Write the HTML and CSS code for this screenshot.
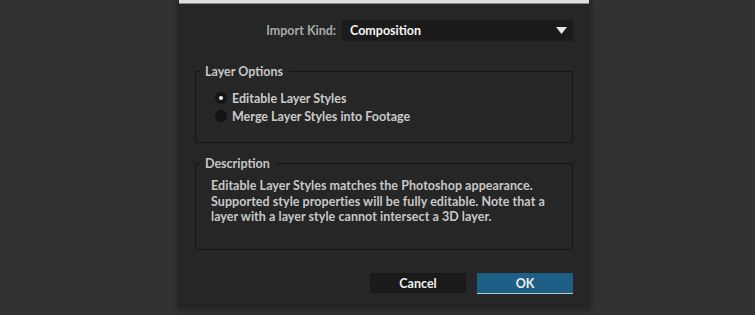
FILE: index.html
```html
<!DOCTYPE html>
<html>
<head>
<meta charset="utf-8">
<link rel="stylesheet" href="styles.css">
</head>
<body>
<div class="dialog">
  <div class="topstrip"></div>
  <div class="content">
    <div class="import-row">
      <span class="import-label">Import Kind:</span>
      <div class="select">
        <span class="select-value">Composition</span>
        <svg class="caret" width="11" height="7" viewBox="0 0 11 7"><path d="M0 0 H11 L5.5 7 Z" fill="#e6e6e6"/></svg>
      </div>
    </div>
    <fieldset class="group options">
      <legend>Layer Options</legend>
      <label class="radio-row"><span class="radio checked"></span>Editable Layer Styles</label>
      <label class="radio-row"><span class="radio"></span>Merge Layer Styles into Footage</label>
    </fieldset>
    <fieldset class="group desc">
      <legend>Description</legend>
      <p class="desc-text">Editable Layer Styles matches the Photoshop appearance.<br>Supported style properties will be fully editable. Note that a<br>layer with a layer style cannot intersect a 3D layer.</p>
    </fieldset>
    <div class="buttons">
      <button class="btn cancel">Cancel</button>
      <button class="btn ok">OK</button>
    </div>
  </div>
</div>
</body>
</html>
```
FILE: styles.css
```css
html, body {
  margin: 0;
  padding: 0;
  background: #323232;
  height: 315px;
  overflow: hidden;
}
body {
  font-family: Lato, "Liberation Sans", sans-serif;
  font-weight: 700;
  font-size: 12.5px;
}
.dialog {
  margin-left: 178px;
  width: 412px;
  height: 309px;
  background: #262626;
  border-right: 1px solid #2c2c2c;
  border-bottom: 1px solid #2c2c2c;
  box-shadow: 0 0 6px rgba(0,0,0,0.35);
}
.topstrip {
  margin: 0 1px;
  height: 3px;
  background: #dedede;
  border-bottom: 1px solid #8a8a8a;
}
.content {
  padding: 16px 17px 0 17px;
}
.import-row {
  display: flex;
  align-items: center;
  height: 21px;
}
.import-label {
  width: 141px;
  text-align: right;
  padding-right: 6px;
  color: #a9a9a9;
}
.select {
  flex: 1;
  height: 21px;
  background: #1b1b1b;
  display: flex;
  align-items: center;
  justify-content: space-between;
  padding: 0 6px 0 8px;
}
.select-value {
  color: #f4f4f4;
}
.caret { display: block; }
.group {
  margin: 0;
  border: 1px solid #151515;
  padding: 0 0 0 15px;
}
.group legend {
  color: #c6c6c6;
  padding: 0 6px 0 5px;
  margin-left: -11px;
}
.options {
  margin-top: 23px;
  height: 79px;
  padding-top: 10px;
  box-sizing: border-box;
}
.radio-row {
  display: flex;
  align-items: center;
  color: #cacaca;
  height: 18px;
}
.radio {
  width: 12px;
  height: 12px;
  border-radius: 50%;
  background: #141414;
  margin-right: 5px;
  margin-left: 4px;
  display: flex;
  align-items: center;
  justify-content: center;
}
.radio.checked::after {
  content: "";
  width: 4px;
  height: 4px;
  border-radius: 50%;
  background: #f0f0f0;
}
.desc {
  margin-top: 13px;
  height: 94px;
  box-sizing: border-box;
}
.desc-text {
  margin: 7px 0 0 0;
  color: #c8c8c8;
  line-height: 15.5px;
  white-space: nowrap;
  letter-spacing: 0.05px;
}
.buttons {
  display: flex;
  justify-content: flex-end;
  gap: 11px;
  margin-top: 23px;
}
.btn {
  width: 96px;
  height: 20px;
  border: none;
  font-family: inherit;
  font-weight: 700;
  font-size: 12.5px;
  color: #f0f0f0;
  padding: 0;
}
.cancel {
  background: #1a1a1a;
}
.ok {
  background: #1d5f85;
  border-bottom: 1px solid #b8c8d2;
  height: 21px;
}
```
